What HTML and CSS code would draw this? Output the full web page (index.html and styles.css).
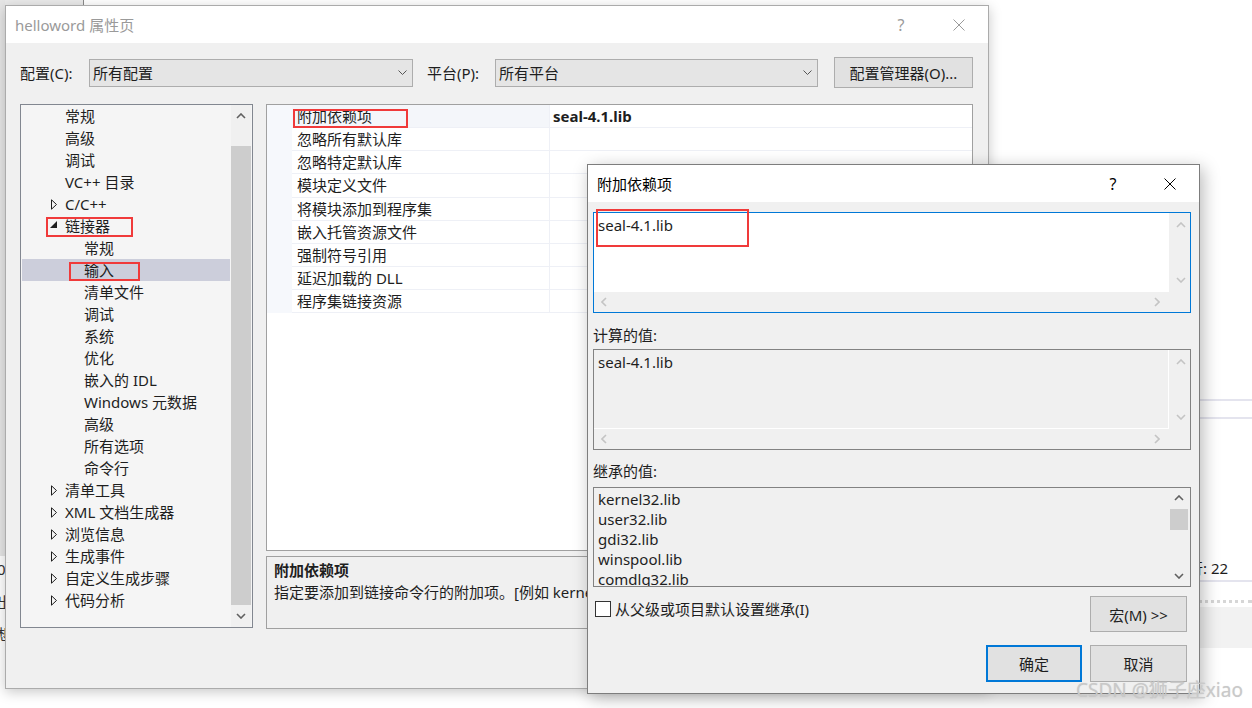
FILE: index.html
```html
<!DOCTYPE html>
<html lang="zh-CN">
<head>
<meta charset="utf-8">
<title>helloword 属性页</title>
<link rel="stylesheet" href="styles.css">
</head>
<body>
<div class="bg-top"><span class="bg-top-grey"></span><span class="bg-top-line"></span></div>
<div class="bg-left"><span class="bl-grey"></span><span class="bl-t1">0</span><span class="bl-t2">出</span><span class="bl-t3">想</span></div>
<div class="bg-right">
  <div class="br-line br-l1"></div>
  <div class="br-line br-l2"></div>
  <div class="br-status">行: 22</div>
  <div class="br-dots"></div>
  <div class="br-band"></div>
</div>

<div class="dlg main">
  <div class="titlebar">
    <span class="title">helloword 属性页</span>
    <span class="tb-btns">
      <span class="tb-q">?</span>
      <svg class="tb-x" width="12" height="12" viewBox="0 0 12 12"><path d="M0.5 0.5L11.5 11.5M11.5 0.5L0.5 11.5" fill="none" stroke="currentColor" stroke-width="1"/></svg>
    </span>
  </div>
  <div class="main-body">
    <div class="cfg-row">
      <span class="lbl lbl1">配置(C):</span>
      <div class="combo combo1"><span>所有配置</span><svg width="9" height="5" viewBox="0 0 9 5"><path d="M0.5 0.5L4.5 4.5L8.5 0.5" fill="none" stroke="currentColor" stroke-width="1"/></svg></div>
      <span class="lbl lbl2">平台(P):</span>
      <div class="combo combo2"><span>所有平台</span><svg width="9" height="5" viewBox="0 0 9 5"><path d="M0.5 0.5L4.5 4.5L8.5 0.5" fill="none" stroke="currentColor" stroke-width="1"/></svg></div>
      <div class="btn mgr">配置管理器(O)...</div>
    </div>
    <div class="content">
      <div class="tree">
        <ul class="tree-list">
          <li class="row l2"><span class="exp"></span>常规</li>
          <li class="row l2"><span class="exp"></span>高级</li>
          <li class="row l2"><span class="exp"></span>调试</li>
          <li class="row l2"><span class="exp"></span>VC++ 目录</li>
          <li class="row l2"><span class="exp"><svg width="8" height="11" viewBox="0 0 8 11"><path d="M1.5 0.8L6.5 5.5L1.5 10.2Z" fill="none" stroke="#1e1e1e" stroke-width="1"/></svg></span>C/C++</li>
          <li class="row l2"><span class="exp"><svg class="open" width="8" height="8" viewBox="0 0 8 8"><path d="M7 0L7 7L0 7Z" fill="#1e1e1e"/></svg></span>链接器</li>
          <li class="row l3"><span class="exp"></span>常规</li>
          <li class="row l3 sel"><span class="exp"></span>输入</li>
          <li class="row l3"><span class="exp"></span>清单文件</li>
          <li class="row l3"><span class="exp"></span>调试</li>
          <li class="row l3"><span class="exp"></span>系统</li>
          <li class="row l3"><span class="exp"></span>优化</li>
          <li class="row l3"><span class="exp"></span>嵌入的 IDL</li>
          <li class="row l3"><span class="exp"></span>Windows 元数据</li>
          <li class="row l3"><span class="exp"></span>高级</li>
          <li class="row l3"><span class="exp"></span>所有选项</li>
          <li class="row l3"><span class="exp"></span>命令行</li>
          <li class="row l2"><span class="exp"><svg width="8" height="11" viewBox="0 0 8 11"><path d="M1.5 0.8L6.5 5.5L1.5 10.2Z" fill="none" stroke="#1e1e1e" stroke-width="1"/></svg></span>清单工具</li>
          <li class="row l2"><span class="exp"><svg width="8" height="11" viewBox="0 0 8 11"><path d="M1.5 0.8L6.5 5.5L1.5 10.2Z" fill="none" stroke="#1e1e1e" stroke-width="1"/></svg></span>XML 文档生成器</li>
          <li class="row l2"><span class="exp"><svg width="8" height="11" viewBox="0 0 8 11"><path d="M1.5 0.8L6.5 5.5L1.5 10.2Z" fill="none" stroke="#1e1e1e" stroke-width="1"/></svg></span>浏览信息</li>
          <li class="row l2"><span class="exp"><svg width="8" height="11" viewBox="0 0 8 11"><path d="M1.5 0.8L6.5 5.5L1.5 10.2Z" fill="none" stroke="#1e1e1e" stroke-width="1"/></svg></span>生成事件</li>
          <li class="row l2"><span class="exp"><svg width="8" height="11" viewBox="0 0 8 11"><path d="M1.5 0.8L6.5 5.5L1.5 10.2Z" fill="none" stroke="#1e1e1e" stroke-width="1"/></svg></span>自定义生成步骤</li>
          <li class="row l2"><span class="exp"><svg width="8" height="11" viewBox="0 0 8 11"><path d="M1.5 0.8L6.5 5.5L1.5 10.2Z" fill="none" stroke="#1e1e1e" stroke-width="1"/></svg></span>代码分析</li>
        </ul>
        <div class="tsb">
          <div class="tsb-btn"><svg width="10" height="6" viewBox="0 0 10 6"><path d="M1 5L5 1L9 5" fill="none" stroke="currentColor" stroke-width="1.6"/></svg></div>
          <div class="tsb-track"><div class="tsb-thumb"></div></div>
          <div class="tsb-btn down"><svg width="10" height="6" viewBox="0 0 10 6"><path d="M1 1L5 5L9 1" fill="none" stroke="currentColor" stroke-width="1.6"/></svg></div>
        </div>
      </div>
      <div class="right-col">
        <div class="grid">
          <div class="grow first"><span class="gut"></span><span class="gname">附加依赖项</span><span class="gval">seal-4.1.lib</span></div>
          <div class="grow"><span class="gut"></span><span class="gname">忽略所有默认库</span><span class="gval"></span></div>
          <div class="grow"><span class="gut"></span><span class="gname">忽略特定默认库</span><span class="gval"></span></div>
          <div class="grow"><span class="gut"></span><span class="gname">模块定义文件</span><span class="gval"></span></div>
          <div class="grow"><span class="gut"></span><span class="gname">将模块添加到程序集</span><span class="gval"></span></div>
          <div class="grow"><span class="gut"></span><span class="gname">嵌入托管资源文件</span><span class="gval"></span></div>
          <div class="grow"><span class="gut"></span><span class="gname">强制符号引用</span><span class="gval"></span></div>
          <div class="grow"><span class="gut"></span><span class="gname">延迟加载的 DLL</span><span class="gval"></span></div>
          <div class="grow"><span class="gut"></span><span class="gname">程序集链接资源</span><span class="gval"></span></div>
        </div>
        <div class="desc">
          <div class="desc-title">附加依赖项</div>
          <div class="desc-text">指定要添加到链接命令行的附加项。[例如 kernel32.lib]</div>
        </div>
      </div>
    </div>
  </div>
</div>

<div class="anno a1"></div>
<div class="anno a2"></div>
<div class="anno a3"></div>

<div class="dlg sub">
  <div class="titlebar sub-tb">
    <span class="title">附加依赖项</span>
    <span class="tb-btns">
      <span class="tb-q">?</span>
      <svg class="tb-x" width="12" height="12" viewBox="0 0 12 12"><path d="M0.5 0.5L11.5 11.5M11.5 0.5L0.5 11.5" fill="none" stroke="currentColor" stroke-width="1"/></svg>
    </span>
  </div>
  <div class="sub-body">
    <div class="edit focus">
      <div class="etxt white">seal-4.1.lib</div>
      <div class="evs">
        <svg width="10" height="6" viewBox="0 0 10 6"><path d="M1 5L5 1L9 5" fill="none" stroke="currentColor" stroke-width="1.6"/></svg>
        <svg width="10" height="6" viewBox="0 0 10 6"><path d="M1 1L5 5L9 1" fill="none" stroke="currentColor" stroke-width="1.6"/></svg>
      </div>
      <div class="ehs">
        <svg width="6" height="10" viewBox="0 0 6 10"><path d="M5 1L1 5L5 9" fill="none" stroke="currentColor" stroke-width="1.6"/></svg>
        <svg width="6" height="10" viewBox="0 0 6 10"><path d="M1 1L5 5L1 9" fill="none" stroke="currentColor" stroke-width="1.6"/></svg>
      </div>
      <div class="ecorner"></div>
    </div>
    <div class="flabel fl1">计算的值:</div>
    <div class="edit">
      <div class="etxt sunken">seal-4.1.lib</div>
      <div class="evs">
        <svg width="10" height="6" viewBox="0 0 10 6"><path d="M1 5L5 1L9 5" fill="none" stroke="currentColor" stroke-width="1.6"/></svg>
        <svg width="10" height="6" viewBox="0 0 10 6"><path d="M1 1L5 5L9 1" fill="none" stroke="currentColor" stroke-width="1.6"/></svg>
      </div>
      <div class="ehs">
        <svg width="6" height="10" viewBox="0 0 6 10"><path d="M5 1L1 5L5 9" fill="none" stroke="currentColor" stroke-width="1.6"/></svg>
        <svg width="6" height="10" viewBox="0 0 6 10"><path d="M1 1L5 5L1 9" fill="none" stroke="currentColor" stroke-width="1.6"/></svg>
      </div>
      <div class="ecorner"></div>
    </div>
    <div class="flabel fl2">继承的值:</div>
    <div class="listbox">
      <div class="litems">
        <div>kernel32.lib</div>
        <div>user32.lib</div>
        <div>gdi32.lib</div>
        <div>winspool.lib</div>
        <div>comdlg32.lib</div>
      </div>
      <div class="lsb">
        <div class="lsb-btn"><svg width="10" height="6" viewBox="0 0 10 6"><path d="M1 5L5 1L9 5" fill="none" stroke="currentColor" stroke-width="1.6"/></svg></div>
        <div class="lsb-track"><div class="lsb-thumb"></div></div>
        <div class="lsb-btn"><svg width="10" height="6" viewBox="0 0 10 6"><path d="M1 1L5 5L9 1" fill="none" stroke="currentColor" stroke-width="1.6"/></svg></div>
      </div>
    </div>
    <div class="opt-row">
      <label class="chk"><span class="chk-box"></span><span>从父级或项目默认设置继承(I)</span></label>
      <div class="btn macro">宏(M) &gt;&gt;</div>
    </div>
    <div class="btn-row">
      <div class="btn ok">确定</div>
      <div class="btn cancel">取消</div>
    </div>
  </div>
</div>

<div class="anno a4"></div>
<div class="watermark">CSDN @狮子座xiao</div>
</body>
</html>
```

FILE: styles.css
```css
* { box-sizing: border-box; }
html, body { margin: 0; padding: 0; }
body {
  width: 1252px;
  height: 708px;
  overflow: hidden;
  position: relative;
  background: #ffffff;
  font-family: "Noto Sans", "Noto Sans CJK SC", sans-serif;
  font-size: 15px;
  color: #1e1e1e;
}
svg { display: block; }

/* ---------- background leftovers ---------- */
.bg-top { position: absolute; left: 0; top: 0; width: 600px; height: 5px; display: flex; }
.bg-top-grey { width: 83px; height: 5px; background: #eaeaea; }
.bg-top-line { width: 1px; height: 5px; background: #8a8a8a; }

.bg-left { position: absolute; left: 0; top: 0; width: 5px; height: 650px; overflow: hidden; }
.bl-grey { position: absolute; left: 0; top: 0; width: 5px; height: 556px; background: #e6e6e6; }
.bl-t1, .bl-t2, .bl-t3 { position: absolute; left: -3px; font-size: 15px; line-height: 20px; color: #333; }
.bl-t1 { top: 559px; }
.bl-t2 { top: 592px; }
.bl-t3 { top: 624px; }

.bg-right { position: absolute; left: 1180px; top: 380px; width: 72px; height: 280px; }
.br-line { position: absolute; left: 0; width: 72px; height: 2px; background: #e4e4ee; }
.br-l1 { top: 19px; }
.br-l2 { top: 37px; }
.br-status { position: absolute; left: 0; top: 174px; width: 72px; height: 28px; border-bottom: 2px solid #e4e4ee; padding-left: 8px; line-height: 28px; font-size: 15px; color: #1e1e1e; white-space: nowrap; }
.br-dots { position: absolute; left: 0; top: 220px; width: 72px; height: 4px; border-top: 3px dotted #d6d6d6; }
.br-band { position: absolute; left: 0; top: 227px; width: 72px; height: 41px; background: #f2f2f2; }

/* ---------- dialogs ---------- */
.dlg { position: absolute; background: #f0f0f0; display: flex; flex-direction: column; }
.main {
  left: 5px; top: 5px; width: 984px; height: 684px;
  border: 1px solid #ababab;
  box-shadow: 0 3px 12px rgba(0, 0, 0, 0.22);
}
.titlebar {
  height: 37px; flex: none; background: #ffffff;
  display: flex; align-items: center;
  padding: 0 23px 0 9px;
}
.title { font-size: 15px; color: #9a9a9a; }
.tb-btns { margin-left: auto; display: flex; align-items: center; gap: 44px; color: #9a9a9a; }
.tb-q { width: 16px; text-align: center; font-size: 16px; line-height: 20px; }

.main-body { flex: 1; padding: 14px 14px 0 14px; }
.cfg-row { display: flex; align-items: center; height: 31px; }
.lbl { flex: none; white-space: nowrap; }
.lbl1 { width: 69px; }
.lbl2 { width: 68px; margin-left: 14px; }
.combo {
  flex: none; height: 28px; border: 1px solid #adadad; background: #e5e5e5;
  display: flex; align-items: center; justify-content: space-between;
  padding: 0 5px 0 3px; color: #1e1e1e;
}
.combo svg { color: #555; }
.combo1 { width: 324px; }
.combo2 { width: 323px; }
.btn {
  flex: none; background: #e1e1e1; border: 1px solid #adadad;
  display: flex; align-items: center; justify-content: center;
  color: #1e1e1e; white-space: nowrap;
}
.mgr { width: 139px; height: 31px; margin-left: 16px; }

.content { display: flex; gap: 13px; margin-top: 16px; }
.tree {
  width: 233px; height: 524px; flex: none;
  border: 1px solid #828790; background: #f5f5f5;
  display: flex;
}
.tree-list { list-style: none; margin: 0; padding: 0 1px; flex: 1; }
.row { height: 22px; line-height: 22px; display: flex; align-items: center; white-space: nowrap; color: #1e1e1e; }
.row.l2 { padding-left: 27px; }
.row.l3 { padding-left: 46px; }
.row.sel { background: #cccedb; }
.exp { width: 16px; height: 22px; flex: none; display: flex; align-items: center; padding-left: 1px; }
.exp svg.open { margin-top: -2px; }

.tsb { width: 20px; margin-right: 1px; flex: none; display: flex; flex-direction: column; background: #f0f0f0; }
.tsb-btn { height: 21px; flex: none; display: flex; align-items: center; justify-content: center; color: #606060; }
.tsb-btn.down { height: 22px; }
.tsb-track { flex: 1; padding-top: 20px; }
.tsb-thumb { height: 459px; background: #cdcdcd; }

.right-col { width: 707px; flex: none; display: flex; flex-direction: column; gap: 5px; }
.grid { height: 447px; border: 1px solid #a0a0a0; background: #ffffff; }
.grow { height: 23.15px; display: flex; }
.gut { width: 25px; flex: none; background: #f6f8fc; }
.gname {
  width: 258px; flex: none; padding-left: 5px; line-height: 22px;
  border-bottom: 1px solid #eef0f6; border-right: 1px solid #eef0f6; white-space: nowrap;
}
.gval { flex: 1; padding-left: 3px; line-height: 22px; border-bottom: 1px solid #eef0f6; font-weight: bold; }
.grow.first .gname { background: #f4f6fa; }

.desc { height: 73px; border: 1px solid #a0a0a0; background: #f0f0f0; padding: 2px 7px; overflow: hidden; }
.desc-title { font-weight: bold; line-height: 22px; }
.desc-text { line-height: 22px; white-space: nowrap; }

/* ---------- sub dialog ---------- */
.sub {
  left: 587px; top: 164px; width: 613px; height: 530px;
  border: 1px solid #7d7d7d;
  box-shadow: 3px 4px 16px rgba(0, 0, 0, 0.28);
}
.sub-tb .title { color: #000; }
.sub-tb .tb-btns { color: #000; gap: 43px; }
.sub-body { flex: 1; padding: 10px 8px 0 5px; display: flex; flex-direction: column; }

.edit {
  height: 101px; flex: none; border: 1px solid #828282;
  display: grid; grid-template-columns: 1fr 21px; grid-template-rows: 1fr 20px;
  color: #1e1e1e;
}
.edit.focus { border-color: #0078d7; }
.etxt { padding: 2px 4px; line-height: 20px; }
.etxt.white { background: #ffffff; }
.etxt.sunken { background: #f0f0f0; border-right: 1px solid #ffffff; border-bottom: 1px solid #ffffff; }
.evs { background: #f0f0f0; color: #c4c4c4; display: flex; flex-direction: column; align-items: center; justify-content: space-between; padding: 9px 0 9px 3px; }
.ehs { background: #f0f0f0; color: #c4c4c4; display: flex; align-items: center; justify-content: space-between; padding: 0 9px 0 7px; }
.ecorner { background: #f0f0f0; }

.flabel { line-height: 20px; }
.fl1 { margin-top: 12px; margin-bottom: 4px; }
.fl2 { margin-top: 11px; margin-bottom: 6px; }

.listbox { height: 100px; flex: none; border: 1px solid #828282; background: #f0f0f0; display: flex; overflow: hidden; }
.litems { flex: 1; padding: 1px 4px; line-height: 20px; }
.lsb { width: 20px; margin-right: 1px; flex: none; display: flex; flex-direction: column; }
.lsb-btn { height: 20px; display: flex; align-items: center; justify-content: center; color: #606060; }
.lsb-track { flex: 1; padding-top: 1px; }
.lsb-thumb { height: 21px; background: #cdcdcd; margin: 0 1px; }

.opt-row { display: flex; align-items: flex-start; margin-top: 9px; }
.chk { display: flex; align-items: center; gap: 4px; margin-left: 2px; margin-top: 5px; line-height: 16px; }
.chk-box { width: 16px; height: 16px; border: 1px solid #333; background: #ffffff; flex: none; }
.macro { width: 97px; height: 36px; margin-left: auto; margin-right: 4px; }
.btn-row { display: flex; justify-content: flex-end; gap: 8px; margin-top: 13px; margin-right: 4px; }
.ok { width: 96px; height: 37px; border: 2px solid #0078d7; }
.cancel { width: 97px; height: 37px; }

/* ---------- annotations ---------- */
.anno { position: absolute; border: 2px solid #f03a3a; }
.a1 { left: 46px; top: 217px; width: 87px; height: 20px; }
.a2 { left: 69px; top: 262px; width: 71px; height: 19px; }
.a3 { left: 293px; top: 109px; width: 115px; height: 19px; }
.a4 { left: 596px; top: 209px; width: 153px; height: 38px; }

.watermark {
  position: absolute; left: 1076px; top: 678px;
  font-size: 19px; line-height: 24px; color: #c9c9c9; white-space: nowrap;
  text-shadow: 0 0 1px rgba(150, 150, 150, 0.3);
}
```
